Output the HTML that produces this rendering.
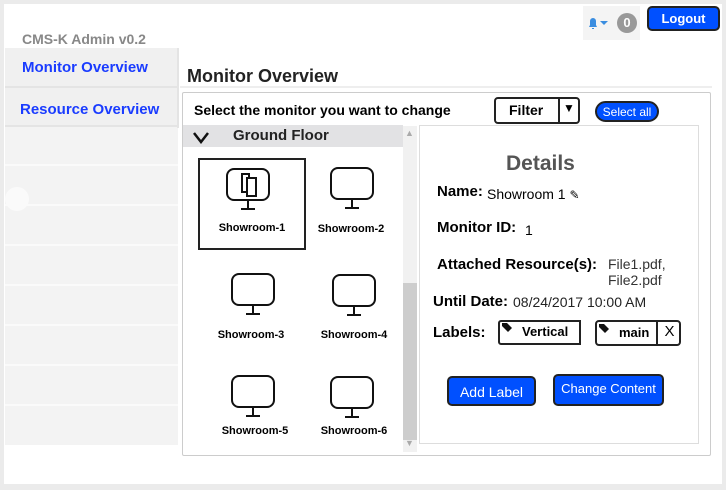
<!DOCTYPE html>
<html><head><style>
*{margin:0;padding:0;box-sizing:border-box}
body{width:726px;height:490px;background:#ebebeb;font-family:"Liberation Sans",Arial,sans-serif;position:relative;overflow:hidden}
.a{position:absolute}
.page{left:4px;top:4px;width:718px;height:480px;background:#fff}
.side{left:5px;top:48px;width:173px;height:397px;background:#f3f3f3}
.row{position:absolute;left:0;width:173px;height:39px;border-bottom:2px solid #fafafa}
.nav{font-weight:bold;color:#1a3cff;font-size:15px}
.mon{position:absolute;text-align:center;font-size:11px;font-weight:bold;width:100px}
.lbl{font-weight:bold;font-size:15px;color:#000}
.btn{background:#0050ff;color:#fff;border:2px solid #222;border-radius:5px;text-align:center}
</style></head><body>
<div class="a page"></div>
<div class="a" style="left:22px;top:31px;font-size:14px;font-weight:bold;color:#888">CMS-K Admin v0.2</div>
<div class="a" style="left:583px;top:6px;width:57px;height:34px;background:#f4f4f4"></div>
<svg class="a" style="left:585px;top:15px" width="40" height="16"><path d="M4 12 L5 10 V6 a3 3 0 0 1 6 0 V10 L12 12 Z M7 13 h2 v1 h-2z" fill="#3a8de0"/><path d="M15 6 h8 l-4 4z" fill="#3a8de0"/></svg>
<div class="a" style="left:617px;top:13px;width:20px;height:20px;border-radius:50%;background:#999;color:#fff;font-weight:bold;font-size:13px;text-align:center;line-height:20px">0</div>
<div class="a btn" style="left:647px;top:6px;width:73px;height:25px;font-size:13px;font-weight:bold;line-height:21px">Logout</div>
<div class="a side">
<div class="row" style="top:0;height:40px;border-bottom:2px solid #e4e4e4;background:#f0f0f0"></div>
<div class="row" style="top:40px;height:39px;border-bottom:2px solid #e4e4e4;background:#f0f0f0"></div>
<div class="row" style="top:79px"></div><div class="row" style="top:119px"></div><div class="row" style="top:159px"></div><div class="row" style="top:199px"></div><div class="row" style="top:239px"></div><div class="row" style="top:279px"></div><div class="row" style="top:319px"></div>
</div>
<div class="a" style="left:5px;top:187px;width:24px;height:24px;border-radius:50%;background:#fafafa"></div>
<div class="a" style="left:177px;top:48px;width:2px;height:80px;background:#e4e4e4"></div>
<div class="a nav" style="left:22px;top:59px">Monitor Overview</div>
<div class="a nav" style="left:20px;top:101px">Resource Overview</div>
<div class="a" style="left:187px;top:66px;font-size:18px;font-weight:bold;color:#222">Monitor Overview</div>
<div class="a" style="left:180px;top:86px;width:532px;height:2px;background:#eee"></div>
<div class="a" style="left:182px;top:92px;width:529px;height:364px;border:1px solid #ccc;border-radius:2px"></div>
<div class="a" style="left:194px;top:102px;font-size:14px;font-weight:bold">Select the monitor you want to change</div>
<div class="a" style="left:494px;top:97px;width:86px;height:27px;border:2px solid #222;border-radius:4px;font-weight:bold;font-size:14px;line-height:23px;padding-left:13px">Filter<span class="a" style="left:62px;top:-2px;height:25px;border-left:2px solid #222;width:20px;text-align:center;font-size:12px;line-height:23px">▼</span></div>
<div class="a btn" style="left:595px;top:101px;width:64px;height:21px;border-radius:11px;font-size:12px;line-height:18px">Select all</div>
<div class="a" style="left:183px;top:125px;width:220px;height:22px;background:#e2e2e4"></div>
<svg class="a" style="left:192px;top:131px" width="18" height="13"><path d="M2 2 L9 11 L16 2" fill="none" stroke="#111" stroke-width="2.5"/></svg>
<div class="a" style="left:233px;top:127px;font-size:15px;font-weight:bold;color:#222">Ground Floor</div>
<div class="a" style="left:403px;top:126px;width:14px;height:326px;background:#f1f1f1"></div>
<div class="a" style="left:403px;top:283px;width:14px;height:157px;background:#cdcdcd"></div>
<div class="a" style="left:405px;top:128px;font-size:9px;color:#aaa">▲</div>
<div class="a" style="left:405px;top:438px;font-size:9px;color:#aaa">▼</div>
<div class="a" style="left:198px;top:158px;width:108px;height:92px;border:2px solid #222"></div>
<svg class="a" style="left:0;top:0" width="420" height="460" fill="none" stroke="#111" stroke-width="2">
<defs><g id="m"><rect x="0" y="0" width="42" height="31" rx="7"/><path d="M21 31 V40 M14 40 H28"/></g></defs>
<use href="#m" x="227" y="169"/><use href="#m" x="331" y="168"/>
<use href="#m" x="232" y="274"/><use href="#m" x="333" y="275"/>
<use href="#m" x="232" y="376"/><use href="#m" x="331" y="377"/>
<rect x="242" y="174" width="7" height="18" fill="#fff"/><rect x="247" y="178" width="9" height="18" fill="#fff"/>
</svg>
<div class="mon" style="left:202px;top:222px">Showroom-1</div>
<div class="mon" style="left:301px;top:223px">Showroom-2</div>
<div class="mon" style="left:201px;top:329px">Showroom-3</div>
<div class="mon" style="left:304px;top:329px">Showroom-4</div>
<div class="mon" style="left:205px;top:425px">Showroom-5</div>
<div class="mon" style="left:304px;top:425px">Showroom-6</div>
<div class="a" style="left:419px;top:125px;width:280px;height:319px;border:1px solid #ddd"></div>
<div class="a" style="left:506px;top:152px;font-size:21px;font-weight:bold;color:#555">Details</div>
<div class="a lbl" style="left:437px;top:183px">Name:</div>
<div class="a" style="left:487px;top:186px;font-size:14px">Showroom 1 <span style="font-size:12px">✎</span></div>
<div class="a lbl" style="left:437px;top:219px">Monitor ID:</div>
<div class="a" style="left:525px;top:222px;font-size:14px">1</div>
<div class="a lbl" style="left:437px;top:256px">Attached Resource(s):</div>
<div class="a" style="left:608px;top:256px;font-size:14px;line-height:16px;color:#333">File1.pdf,<br>File2.pdf</div>
<div class="a lbl" style="left:433px;top:293px">Until Date:</div>
<div class="a" style="left:513px;top:294px;font-size:14px;color:#222">08/24/2017 10:00 AM</div>
<div class="a lbl" style="left:433px;top:324px">Labels:</div>
<div class="a" style="left:498px;top:320px;width:83px;height:25px;border:2px solid #222;border-radius:3px 0 0 3px;font-weight:bold;font-size:13px;line-height:20px;padding-left:22px">Vertical</div>
<div class="a" style="left:595px;top:320px;width:86px;height:26px;border:2px solid #222;border-radius:4px;font-weight:bold;font-size:13px;line-height:22px;padding-left:22px">main<span class="a" style="left:59px;top:-2px;width:25px;height:26px;border-left:2px solid #222;font-weight:normal;font-size:15px;text-align:center;line-height:24px">X</span></div>
<svg class="a" style="left:500px;top:322px" width="100" height="12"><path d="M2 1 h5 l5 5 l-4 4 l-6 -6z" fill="#111"/><path d="M98 1 h0" /></svg>
<svg class="a" style="left:597px;top:323px" width="14" height="12"><path d="M2 1 h5 l5 5 l-4 4 l-6 -6z" fill="#111"/></svg>
<div class="a btn" style="left:447px;top:376px;width:89px;height:30px;font-size:14px;line-height:28px">Add Label</div>
<div class="a btn" style="left:553px;top:374px;width:111px;height:32px;font-size:13px;line-height:26px">Change Content</div>
</body></html>
